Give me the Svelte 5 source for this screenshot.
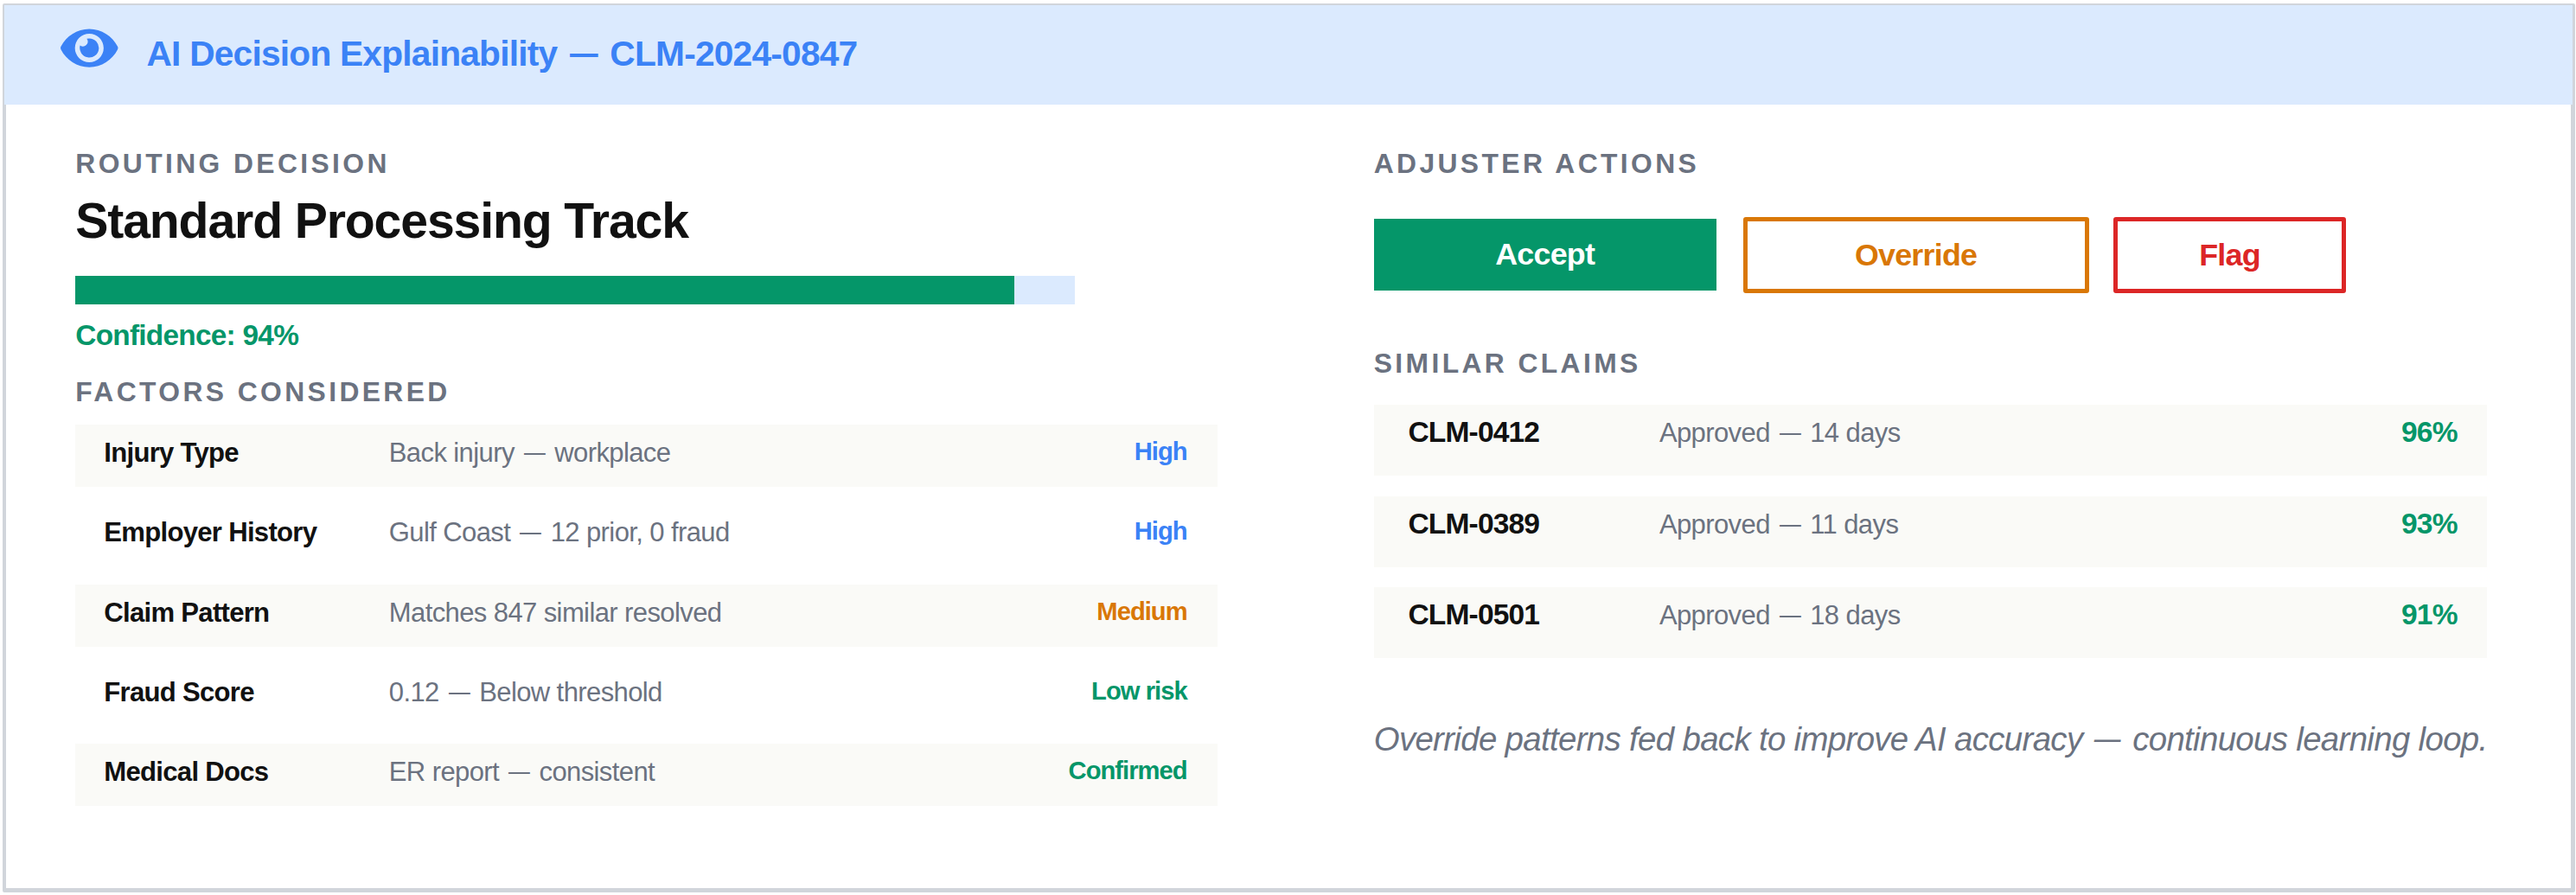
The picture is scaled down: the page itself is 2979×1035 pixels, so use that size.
<script>
  const confidence = 94;

  const factors = [
    { name: "Injury Type", value: ["Back injury", "workplace"], impact: "High", tone: "blue" },
    { name: "Employer History", value: ["Gulf Coast", "12 prior, 0 fraud"], impact: "High", tone: "blue" },
    { name: "Claim Pattern", value: ["Matches 847 similar resolved"], impact: "Medium", tone: "orange" },
    { name: "Fraud Score", value: ["0.12", "Below threshold"], impact: "Low risk", tone: "green" },
    { name: "Medical Docs", value: ["ER report", "consistent"], impact: "Confirmed", tone: "green" },
  ];

  const claims = [
    { id: "CLM-0412", result: ["Approved", "14 days"], match: 96 },
    { id: "CLM-0389", result: ["Approved", "11 days"], match: 93 },
    { id: "CLM-0501", result: ["Approved", "18 days"], match: 91 },
  ];
</script>

{#snippet dashed(parts)}
  {parts[0]}{#if parts[1]}{" "}<span class="dash">—</span>{" "}{parts[1]}{/if}
{/snippet}

<div class="card">
  <header>
    <svg class="eye" viewBox="0 0 576 512" aria-hidden="true">
      <path
        d="M572.52 241.4C518.29 135.59 410.93 64 288 64S57.68 135.64 3.48 241.41a32.35 32.35 0 0 0 0 29.19C57.71 376.41 165.07 448 288 448s230.32-71.64 284.52-177.41a32.35 32.35 0 0 0 0-29.19zM288 400a144 144 0 1 1 144-144 143.93 143.93 0 0 1-144 144zm0-240a95.31 95.31 0 0 0-25.31 3.79 47.85 47.85 0 0 1-66.9 66.9A95.78 95.78 0 1 0 288 160z"
      />
    </svg>
    <h1>{@render dashed(["AI Decision Explainability", "CLM-2024-0847"])}</h1>
  </header>

  <div class="columns">
    <section class="decision">
      <h2>ROUTING DECISION</h2>
      <p class="track">Standard Processing Track</p>
      <div class="bar">
        <div class="fill" style="width: {confidence}%"></div>
      </div>
      <p class="confidence">Confidence: {confidence}%</p>

      <h2>FACTORS CONSIDERED</h2>
      <div class="factors">
        {#each factors as factor}
          <div class="factor">
            <span class="name">{factor.name}</span>
            <span class="value">{@render dashed(factor.value)}</span>
            <span class="impact {factor.tone}">{factor.impact}</span>
          </div>
        {/each}
      </div>
    </section>

    <section class="actions">
      <h2>ADJUSTER ACTIONS</h2>
      <div class="buttons">
        <button class="accept">Accept</button>
        <button class="override">Override</button>
        <button class="flag">Flag</button>
      </div>

      <h2>SIMILAR CLAIMS</h2>
      <div class="claims">
        {#each claims as claim}
          <div class="claim">
            <span class="id">{claim.id}</span>
            <span class="value">{@render dashed(claim.result)}</span>
            <span class="match">{claim.match}%</span>
          </div>
        {/each}
      </div>

      <p class="note">
        {@render dashed(["Override patterns fed back to improve AI accuracy", "continuous learning loop."])}
      </p>
    </section>
  </div>
</div>

<style>
  :global(body) {
    margin: 0;
    background: #fff;
  }

  .card {
    box-sizing: border-box;
    width: 2975px;
    height: 1028px;
    margin: 4px 0 0 3px;
    border: 5px solid #d1d5db;
    border-left-width: 4px;
    border-radius: 2px;
    font-family: "Liberation Sans", Arial, Helvetica, sans-serif;
    color: #111;
    white-space: nowrap;
  }

  h1,
  h2,
  p {
    margin: 0;
  }

  /* the header band runs over the inner half of the frame */
  header {
    display: flex;
    box-sizing: border-box;
    height: 115px;
    margin: -3px -2px 0;
    padding: 19.5px 65.3px 0;
    background: #dbeafe;
    color: #3b82f6;
  }

  .eye {
    width: 66.5px;
    height: 59px;
    margin-right: 32.7px;
    fill: currentColor;
  }

  h1 {
    margin-top: 14.8px;
    font-size: 40.7px;
    line-height: 44px;
    letter-spacing: -0.78px;
  }

  .dash {
    display: inline-block;
    transform: translateY(-0.03em) scaleX(0.8);
  }

  .columns {
    display: grid;
    grid-template-columns: 1320.4px 1287px;
    column-gap: 181px;
    padding: 50.3px 0 0 80.3px;
  }

  h2 {
    font-size: 31.8px;
    line-height: 36px;
    letter-spacing: 3.4px;
    color: #6b7280;
  }

  .track {
    margin-top: 15.5px;
    font-size: 57.2px;
    font-weight: bold;
    line-height: 64px;
    letter-spacing: -1.15px;
  }

  .bar {
    width: 1155.5px;
    height: 33px;
    margin-top: 32.2px;
    background: #dbeafe;
  }

  .fill {
    height: 100%;
    background: #059669;
  }

  .confidence {
    margin: 17.6px 0 29.6px;
    font-size: 33.4px;
    font-weight: bold;
    line-height: 36px;
    letter-spacing: -0.75px;
    color: #059669;
  }

  .factors {
    display: grid;
    row-gap: 20px;
    margin-top: 19.8px;
  }

  .factor {
    display: grid;
    grid-template-columns: 329.5px 1fr auto;
    align-items: start;
    box-sizing: border-box;
    height: 72.3px;
    padding: 15.2px 35px 0 33px;
  }

  .factor:nth-child(odd) {
    background: #fafaf7;
  }

  .name {
    font-size: 31.1px;
    font-weight: bold;
    line-height: 36px;
    letter-spacing: -0.72px;
  }

  .value {
    font-size: 31px;
    line-height: 36px;
    letter-spacing: -0.6px;
    color: #6b7280;
  }

  .impact {
    font-size: 29.2px;
    font-weight: bold;
    line-height: 33px;
    letter-spacing: -0.98px;
  }

  .blue {
    color: #3b82f6;
  }

  .orange {
    color: #d97706;
  }

  .green {
    color: #059669;
  }

  .buttons {
    display: flex;
    gap: 33.4px;
    margin: 45.7px 0 66.4px;
  }

  button {
    box-sizing: border-box;
    height: 83px;
    padding: 0;
    border: none;
    background: #fff;
    font-family: inherit;
    font-size: 35.8px;
    font-weight: bold;
    line-height: 40px;
    letter-spacing: -0.74px;
  }

  .accept {
    width: 396px;
    background: #059669;
    color: #fff;
  }

  /* outlined buttons carry their stroke centred on the edge */
  .override,
  .flag {
    height: 88px;
    margin: -2px -2.5px -3px;
    border: 5px solid currentColor;
    border-radius: 3px;
  }

  .override {
    width: 400px;
    color: #d97706;
  }

  .flag {
    width: 269px;
    color: #dc2626;
  }

  .claims {
    display: grid;
    row-gap: 23.5px;
    margin-top: 29.9px;
  }

  .claim {
    display: grid;
    grid-template-columns: 290.5px 1fr auto;
    align-items: baseline;
    box-sizing: border-box;
    height: 82px;
    padding: 13.8px 34px 0 39.7px;
    background: #fafaf7;
  }

  .id,
  .match {
    font-size: 33.6px;
    font-weight: bold;
    line-height: 36px;
    letter-spacing: -0.85px;
  }

  .match {
    color: #059669;
  }

  .note {
    margin-top: 71.5px;
    font-size: 38.4px;
    font-style: italic;
    line-height: 44px;
    letter-spacing: -0.66px;
    color: #6b7280;
  }
</style>
